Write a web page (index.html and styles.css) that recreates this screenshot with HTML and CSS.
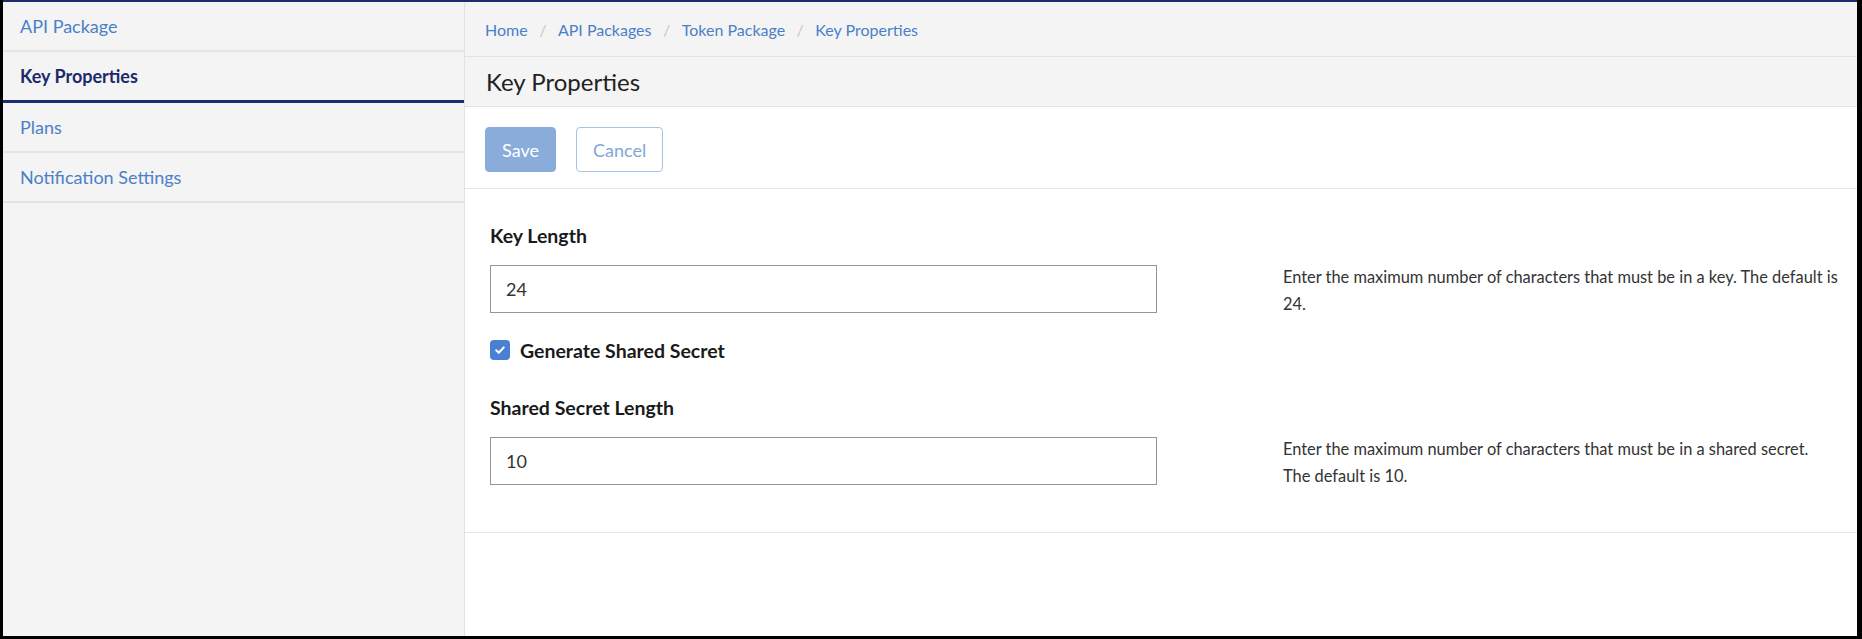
FILE: index.html
```html
<!DOCTYPE html>
<html lang="en">
<head>
<meta charset="utf-8">
<title>Key Properties</title>
<link rel="stylesheet" href="styles.css">
</head>
<body>
<div class="frame">
  <div class="app">
    <nav class="sidebar">
      <a class="side-item" href="#">API Package</a>
      <a class="side-item active" href="#">Key Properties</a>
      <a class="side-item" href="#">Plans</a>
      <a class="side-item" href="#">Notification Settings</a>
    </nav>
    <main class="main">
      <ol class="breadcrumb">
        <li><a href="#">Home</a></li>
        <li><a href="#">API Packages</a></li>
        <li><a href="#">Token Package</a></li>
        <li><a href="#">Key Properties</a></li>
      </ol>
      <h1 class="title">Key Properties</h1>
      <div class="actions">
        <button class="btn btn-primary" type="button">Save</button>
        <button class="btn btn-outline" type="button">Cancel</button>
      </div>
      <section class="form">
        <div class="field">
          <label class="field-label" for="keylen">Key Length</label>
          <div class="field-row">
            <input class="text-input" id="keylen" type="text" value="24">
            <p class="help">Enter the maximum number of characters that must be in a key. The default is 24.</p>
          </div>
        </div>
        <div class="check-row">
          <span class="checkbox"><svg viewBox="0 0 20 20" width="20" height="20"><path d="M6.2 10.3 L8.8 12.8 L13.8 7.4" fill="none" stroke="#fff" stroke-width="2" stroke-linecap="round" stroke-linejoin="round"/></svg></span>
          <span class="check-label">Generate Shared Secret</span>
        </div>
        <div class="field field-second">
          <label class="field-label" for="seclen">Shared Secret Length</label>
          <div class="field-row">
            <input class="text-input" id="seclen" type="text" value="10">
            <p class="help">Enter the maximum number of characters that must be in a shared secret.<br>The default is 10.</p>
          </div>
        </div>
      </section>
    </main>
  </div>
</div>
</body>
</html>
```
FILE: styles.css
```css
html, body {
  margin: 0;
  padding: 0;
  background: #000;
}
.frame {
  width: 1862px;
  height: 639px;
  box-sizing: border-box;
  padding: 0 5px 3px 3px;
}
.app {
  display: flex;
  height: 636px;
  box-sizing: border-box;
  border-top: 2px solid #1d2c6c;
  background: #fff;
  font-family: "Source Sans Pro", Lato, "Noto Sans", sans-serif;
  color: #222;
}
.sidebar {
  width: 461px;
  flex: none;
  background: #f4f4f4;
  border-right: 1px solid #e2e2e2;
  display: flex;
  flex-direction: column;
}
.side-item {
  display: block;
  height: 48px;
  line-height: 48px;
  padding-left: 17px;
  border-bottom: 2px solid #e4e4e4;
  font-size: 18px;
  color: #4a80c9;
  text-decoration: none;
}
.side-item.active {
  color: #1b2a6a;
  font-weight: 700;
  border-bottom: 3px solid #1d2c6c;
}
.main {
  flex: 1;
  display: flex;
  flex-direction: column;
  min-width: 0;
}
.breadcrumb {
  margin: 0;
  list-style: none;
  display: flex;
  height: 55px;
  align-items: center;
  padding: 1px 0 0 20px;
  box-sizing: border-box;
  background: #f4f4f4;
  border-bottom: 1px solid #e2e2e2;
  font-size: 16px;
}
.breadcrumb li + li::before {
  content: "/";
  color: #c8c8c8;
  padding: 0 11.5px;
}
.breadcrumb a {
  color: #4a80c9;
  text-decoration: none;
}
.title {
  margin: 0;
  height: 49px;
  line-height: 49px;
  padding-left: 21px;
  background: #f4f4f4;
  border-bottom: 1px solid #e2e2e2;
  font-size: 24px;
  font-weight: 400;
  color: #222;
}
.actions {
  display: flex;
  gap: 20px;
  padding: 20px 20px 16px;
  border-bottom: 1px solid #e6e6e6;
}
.btn {
  height: 45px;
  padding: 0 16px;
  border-radius: 4px;
  font-family: inherit;
  font-size: 18px;
}
.btn-primary {
  background: #8aacdb;
  border: 1px solid #8aacdb;
  color: #fff;
}
.btn-outline {
  background: #fff;
  border: 1px solid #a9c3e8;
  color: #82a6d8;
}
.form {
  padding: 35px 10px 47px 25px;
  border-bottom: 1px solid #e6e6e6;
}
.field-label {
  display: block;
  font-size: 19.5px;
  line-height: 24px;
  font-weight: 700;
  color: #1a1a1a;
  margin-bottom: 17px;
}
.field-row {
  display: grid;
  grid-template-columns: 667px 1fr;
  grid-template-rows: 48px;
  column-gap: 126px;
  align-items: start;
}
.text-input {
  height: 48px;
  box-sizing: border-box;
  border: 1px solid #959595;
  padding: 0 15px;
  font-family: inherit;
  font-size: 18px;
  color: #333;
  background: #fff;
  width: 100%;
}
.help {
  margin: -2px 0 0;
  max-width: 565px;
  font-size: 16.4px;
  line-height: 27px;
  color: #333;
}
.check-row {
  display: flex;
  align-items: center;
  gap: 10px;
  height: 24px;
  margin-top: 25px;
}
.checkbox {
  width: 20px;
  height: 20px;
  border-radius: 4px;
  background: #4a80d2;
  display: flex;
}
.check-label {
  font-size: 19.5px;
  font-weight: 700;
  color: #1a1a1a;
}
.field-second {
  margin-top: 34px;
}
```
